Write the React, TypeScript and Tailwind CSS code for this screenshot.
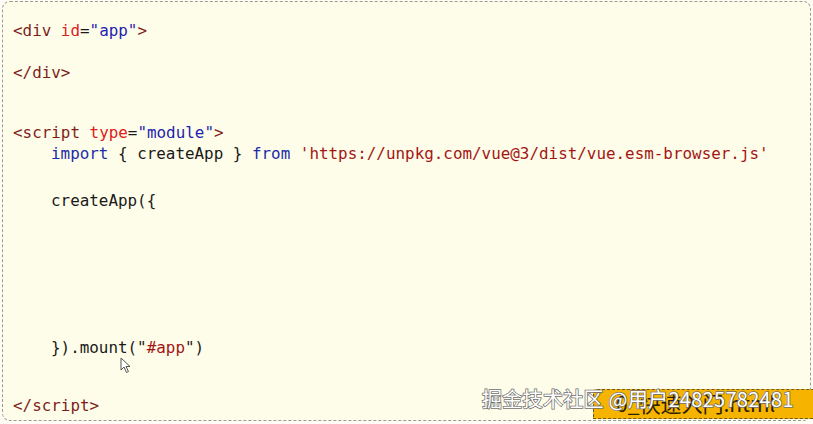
const Tag = ({ children }: { children: React.ReactNode }) => (
  <span className="text-[#7f1d1d]">{children}</span>
);

const lines: { mt: string; indent?: boolean; content: React.ReactNode }[] = [
  {
    mt: "mt-0",
    content: (
      <>
        <Tag>&lt;div</Tag> <span className="text-[#e0201c]">id</span>
        <span>=</span>
        <span className="text-[#1f1fb0]">"app"</span>
        <Tag>&gt;</Tag>
      </>
    ),
  },
  { mt: "mt-[21px]", content: <Tag>&lt;/div&gt;</Tag> },
  {
    mt: "mt-[39px]",
    content: (
      <>
        <Tag>&lt;script</Tag> <span className="text-[#e0201c]">type</span>
        <span>=</span>
        <span className="text-[#1f1fb0]">"module"</span>
        <Tag>&gt;</Tag>
      </>
    ),
  },
  {
    mt: "mt-0",
    indent: true,
    content: (
      <>
        <span className="text-[#1c2ca8]">import</span> {"{"} createApp {"}"}{" "}
        <span className="text-[#1c2ca8]">from</span>{" "}
        <span className="text-[#a31515]">'https://unpkg.com/vue@3/dist/vue.esm-browser.js'</span>
      </>
    ),
  },
  { mt: "mt-[26px]", indent: true, content: <>{"createApp({"}</> },
  {
    mt: "mt-[126px]",
    indent: true,
    content: (
      <>
        {"})"}.mount("<span className="text-[#a31515]">#app</span>")
      </>
    ),
  },
  { mt: "mt-[37px]", content: <Tag>&lt;/script&gt;</Tag> },
];

export default function App() {
  return (
    <div className="relative w-[813px] h-[424px] bg-[#fdfdf6] overflow-hidden">
      <div className="h-[420px] ml-[2px] mt-[1px] mr-[2px] rounded-[8px] border border-dashed border-[#9a9a90] bg-[#fefde9] pt-[18px] pl-[10px] font-['DejaVu_Sans_Mono',monospace] text-[15.9px] leading-[21px] text-[#1a1a1a] whitespace-pre">
        {lines.map((l, i) => (
          <div key={i} className={`${l.mt} ${l.indent ? "pl-[38px]" : ""}`}>
            {l.content}
          </div>
        ))}
      </div>

      {/* mouse cursor */}
      <svg className="absolute left-[120px] top-[357px]" width="12" height="17" viewBox="0 0 12 17">
        <path d="M1 1 L1 13 L4 10 L6.5 15.5 L8.5 14.5 L6 9.5 L10 9.5 Z" fill="#fff" stroke="#555" strokeWidth="1" />
      </svg>

      {/* file tab */}
      <div className="absolute left-[593px] top-[389px] w-[230px] h-[30px] bg-[#f6b400] border border-dashed border-[#6b5a20] rounded-tl-[4px] pl-[22px] flex items-center font-['Noto_Sans_CJK_SC',sans-serif] text-[21px] text-[#2a2000]">
        0_快速入门.html
      </div>

      {/* watermark */}
      <div className="absolute left-[482px] top-[383px] font-['Noto_Sans_CJK_SC',sans-serif] text-[20px] leading-[32px] text-white [-webkit-text-stroke:1.5px_#6e6e6e] [paint-order:stroke_fill] tracking-[0.3px]">
        掘金技术社区 @用户24825782481
      </div>
    </div>
  );
}
